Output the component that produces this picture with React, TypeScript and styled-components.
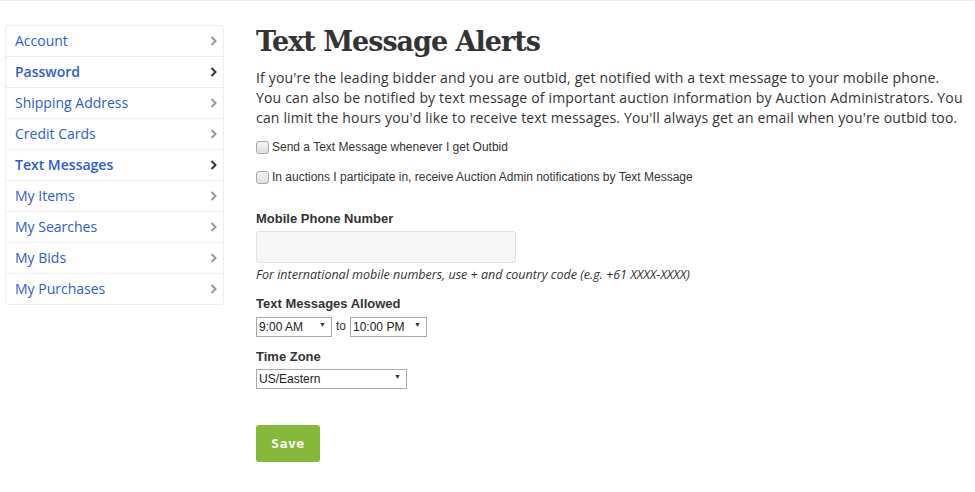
import styled, { createGlobalStyle } from "styled-components";

const GlobalStyle = createGlobalStyle`
  html, body {
    margin: 0;
    padding: 0;
    background: #fff;
  }
  body {
    font-family: "Open Sans", "Liberation Sans", sans-serif;
    color: #333;
  }
`;

const menu = [
  { label: "Account" },
  { label: "Password", bold: true },
  { label: "Shipping Address" },
  { label: "Credit Cards" },
  { label: "Text Messages", bold: true },
  { label: "My Items" },
  { label: "My Searches" },
  { label: "My Bids" },
  { label: "My Purchases" },
];

function Chevron({ dark }: { dark?: boolean }) {
  return (
    <svg width="8" height="12" viewBox="0 0 8 12">
      <polyline
        points="1.5,2 5.5,6 1.5,10"
        fill="none"
        stroke={dark ? "#333" : "#999"}
        strokeWidth="2"
      />
    </svg>
  );
}

export default function App() {
  return (
    <>
      <GlobalStyle />
      <Page>
        <Sidebar>
          {menu.map((m) => (
            <MenuItem key={m.label} $bold={m.bold}>
              <span>{m.label}</span>
              <Chevron dark={m.bold} />
            </MenuItem>
          ))}
        </Sidebar>
        <Main>
          <Title>Text Message Alerts</Title>
          <Intro>
            If you're the leading bidder and you are outbid, get notified with a
            text message to your mobile phone. You can also be notified by text
            message of important auction information by Auction Administrators.
            You can limit the hours you'd like to receive text messages. You'll
            always get an email when you're outbid too.
          </Intro>
          <CheckRow>
            <CheckBox type="checkbox" />
            Send a Text Message whenever I get Outbid
          </CheckRow>
          <CheckRow>
            <CheckBox type="checkbox" />
            In auctions I participate in, receive Auction Admin notifications by
            Text Message
          </CheckRow>

          <Field $top={19}>
            <Label $gap={4}>Mobile Phone Number</Label>
            <PhoneInput type="text" />
            <Hint>
              For international mobile numbers, use + and country code (e.g.
              +61 XXXX-XXXX)
            </Hint>
          </Field>

          <Field $top={13}>
            <Label $gap={2}>Text Messages Allowed</Label>
            <SelectRow>
              <SelectWrap $w={76}>
                <Select defaultValue="9:00 AM">
                  <option>9:00 AM</option>
                </Select>
                <Arrow>▼</Arrow>
              </SelectWrap>
              <To>to</To>
              <SelectWrap $w={77}>
                <Select defaultValue="10:00 PM">
                  <option>10:00 PM</option>
                </Select>
                <Arrow>▼</Arrow>
              </SelectWrap>
            </SelectRow>
          </Field>

          <Field $top={15}>
            <Label $gap={1}>Time Zone</Label>
            <SelectWrap $w={151}>
              <Select defaultValue="US/Eastern">
                <option>US/Eastern</option>
              </Select>
              <Arrow>▼</Arrow>
            </SelectWrap>
          </Field>

          <SaveButton>Save</SaveButton>
        </Main>
      </Page>
    </>
  );
}

const Page = styled.div`
  border-top: 1px solid #eee;
  display: flex;
  align-items: flex-start;
  gap: 32px;
  padding: 24px 10px 30px 5px;
`;

const Sidebar = styled.div`
  width: 217px;
  flex-shrink: 0;
  border: 1px solid #eee;
  border-radius: 3px;
  display: flex;
  flex-direction: column;
`;

const MenuItem = styled.div<{ $bold?: boolean }>`
  height: 30px;
  box-sizing: border-box;
  display: flex;
  align-items: center;
  justify-content: space-between;
  padding: 0 5px 2px 9px;
  border-top: 1px solid #eee;
  font-size: 14px;
  color: #2f5bd3;
  font-weight: ${(p) => (p.$bold ? 600 : 400)};

  &:first-child {
    border-top: none;
  }

  & + & {
    height: 31px;
  }

  svg {
    margin-top: 2px;
  }
`;

const Main = styled.div`
  flex: 1;
  display: flex;
  flex-direction: column;
  align-items: flex-start;
`;

const Title = styled.h1`
  margin: 1px 0 0;
  font-family: "DejaVu Serif", "Liberation Serif", serif;
  font-weight: 700;
  font-size: 27px;
  line-height: 32px;
  color: #333;
  letter-spacing: -1px;
`;

const Intro = styled.p`
  margin: 10px 0 4px;
  font-size: 14px;
  line-height: 20px;
  letter-spacing: 0.17px;
  color: #333;
`;

const CheckRow = styled.label`
  display: flex;
  align-items: center;
  height: 30px;
  font-family: "Liberation Sans", Arial, sans-serif;
  font-size: 12px;
  color: #333;
`;

const CheckBox = styled.input`
  appearance: none;
  margin: 0 3px 0 0;
  width: 13px;
  height: 13px;
  box-sizing: border-box;
  border: 1px solid #a8a8a8;
  border-radius: 3px;
  background: linear-gradient(#f4f4f4, #dedede);
`;

const Field = styled.div<{ $top: number }>`
  margin-top: ${(p) => p.$top}px;
  display: flex;
  flex-direction: column;
  align-items: flex-start;
`;

const Label = styled.div<{ $gap: number }>`
  font-family: "Liberation Sans", Arial, sans-serif;
  font-weight: 700;
  font-size: 13px;
  line-height: 16px;
  margin-bottom: ${(p) => p.$gap}px;
  color: #333;
`;

const PhoneInput = styled.input`
  width: 260px;
  height: 32px;
  box-sizing: border-box;
  border: 1px solid #e2e2e2;
  border-radius: 3px;
  background: #f7f7f7;
  outline: none;
`;

const Hint = styled.div`
  margin-top: 3px;
  font-size: 12.5px;
  font-style: italic;
  line-height: 17px;
  color: #333;
`;

const SelectRow = styled.div`
  display: flex;
  align-items: center;
  gap: 4px;
`;

const SelectWrap = styled.div<{ $w: number }>`
  position: relative;
  width: ${(p) => p.$w}px;
  height: 20px;
`;

const Select = styled.select`
  appearance: none;
  width: 100%;
  height: 100%;
  box-sizing: border-box;
  border: 1px solid #a9a9a9;
  border-radius: 0;
  background: #fff;
  font-family: "Liberation Sans", Arial, sans-serif;
  font-size: 12px;
  color: #222;
  padding: 0 2px;
  outline: none;
`;

const Arrow = styled.span`
  position: absolute;
  right: 6px;
  top: 0;
  bottom: 0;
  display: flex;
  align-items: center;
  font-size: 7px;
  color: #333;
  pointer-events: none;
`;

const To = styled.span`
  font-family: "Liberation Sans", Arial, sans-serif;
  font-size: 12px;
  line-height: 14px;
  padding-top: 3px;
  color: #333;
`;

const SaveButton = styled.button`
  margin-top: 39px;
  width: 64px;
  height: 37px;
  border: none;
  border-radius: 3px;
  background: #84b93a;
  color: #fff;
  font-family: "DejaVu Sans Mono", monospace;
  font-weight: 700;
  font-size: 13px;
  letter-spacing: 0.5px;
`;
